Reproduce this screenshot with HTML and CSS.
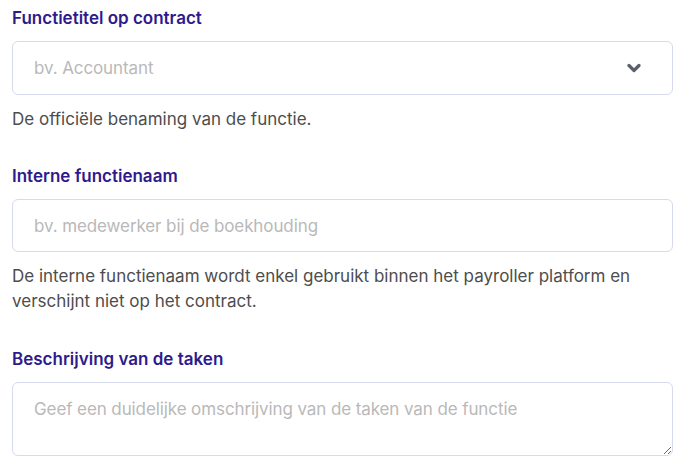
FILE: index.html
```html
<!DOCTYPE html>
<html lang="nl">
<head>
<meta charset="utf-8">
<link rel="stylesheet" href="styles.css">
</head>
<body>
<form class="form">
  <div class="field">
    <label class="label">Functietitel op contract</label>
    <div class="select">
      <span class="placeholder">bv. Accountant</span>
      <svg class="chevron" width="14" height="10" viewBox="0 0 14 10"><path d="M2 2.5 L7 7.5 L12 2.5" fill="none" stroke="#5d5f6e" stroke-width="3.2" stroke-linecap="round" stroke-linejoin="round"/></svg>
    </div>
    <p class="help">De officiële benaming van de functie.</p>
  </div>
  <div class="field">
    <label class="label">Interne functienaam</label>
    <input class="input" type="text" placeholder="bv. medewerker bij de boekhouding">
    <p class="help">De interne functienaam wordt enkel gebruikt binnen het payroller platform en verschijnt niet op het contract.</p>
  </div>
  <div class="field field-last">
    <label class="label">Beschrijving van de taken</label>
    <textarea class="textarea" placeholder="Geef een duidelijke omschrijving van de taken van de functie"></textarea>
  </div>
</form>
</body>
</html>
```
FILE: styles.css
```css
html, body {
  margin: 0;
  padding: 0;
  background: #ffffff;
}
body {
  font-family: Inter, "Noto Sans", sans-serif;
  font-size: 17px;
  color: #4a4a4a;
}
.form {
  padding: 6px 15px 0 12px;
  display: flex;
  flex-direction: column;
  gap: 32px;
}
.field {
  display: flex;
  flex-direction: column;
}
.field-last {
  margin-top: 1px;
}
.label {
  display: block;
  font-size: 17px;
  line-height: 24px;
  font-weight: 600;
  color: #2e1a8c;
  margin-bottom: 11px;
}
.select, .input, .textarea {
  box-sizing: border-box;
  width: 100%;
  border: 1px solid #d6daec;
  border-radius: 6px;
  background: #fff;
  font-family: inherit;
  font-size: 17px;
  color: #333;
  letter-spacing: -0.1px;
}
.select {
  height: 54px;
  display: flex;
  align-items: center;
  justify-content: space-between;
  padding: 0 31px 0 21px;
}
.placeholder {
  color: #b9b9b9;
}
.chevron {
  display: block;
}
.input {
  height: 53px;
  padding: 0 21px;
  outline: none;
}
.input::placeholder, .textarea::placeholder {
  color: #b9b9b9;
  opacity: 1;
}
.textarea {
  height: 74px;
  padding: 14px 21px;
  line-height: 24px;
  resize: vertical;
  display: block;
}
.help {
  margin: 12px 0 0;
  line-height: 25px;
  color: #4d4d4d;
}
```
